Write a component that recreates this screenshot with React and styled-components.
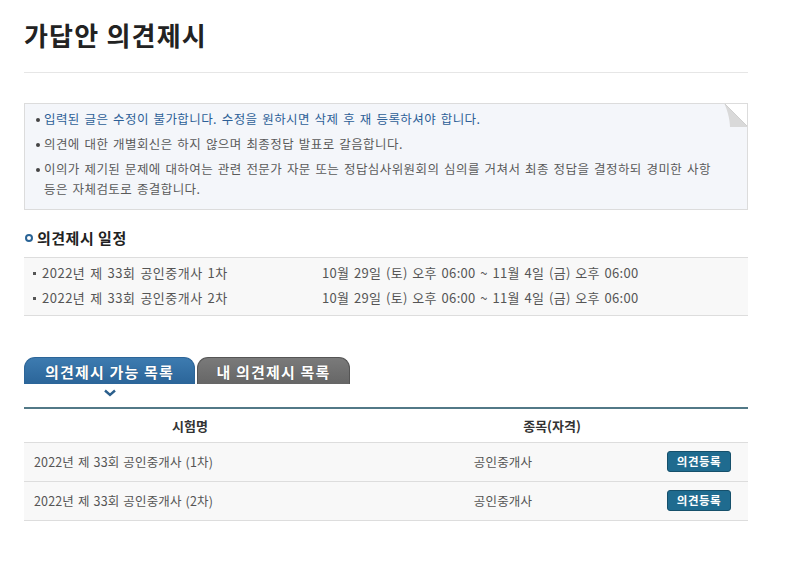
import React from "react";
import styled, { createGlobalStyle } from "styled-components";

const Global = createGlobalStyle`
  html, body { margin: 0; padding: 0; background: #fff; }
  body { font-family: "Noto Sans CJK KR", "Noto Sans", sans-serif; color: #333; }
  * { box-sizing: border-box; }
`;

const Page = styled.div`
  width: 772px;
  padding: 0 0 0 24px;
`;

const Inner = styled.div`
  width: 724px;
`;

const Title = styled.h1`
  margin: 0;
  padding-top: 17px;
  height: 73px;
  font-size: 26px;
  font-weight: 700;
  line-height: 36px;
  color: #222;
  letter-spacing: 1.2px;
  border-bottom: 1px solid #e6e6e6;
`;

const Notice = styled.div`
  position: relative;
  margin-top: 30px;
  background: #f4f6fa;
  border: 1px solid #dcdcdc;
  padding: 5px 20px 10px 10px;
  overflow: hidden;
`;

const Corner = styled.svg`
  position: absolute;
  top: -1px;
  right: -1px;
  display: block;
`;

const NoticeList = styled.ul`
  list-style: none;
  margin: 0;
  padding: 0;
`;

const NoticeItem = styled.li`
  position: relative;
  padding-left: 9px;
  font-size: 12.5px;
  line-height: 20px;
  letter-spacing: 0.42px;
  word-spacing: 1.5px;
  color: ${(p) => (p.$accent ? "#2d5f97" : "#5a5a5a")};
  & + & { margin-top: 5px; }
  &::before {
    content: "";
    position: absolute;
    left: 1px;
    top: 9px;
    width: 4px;
    height: 4px;
    border-radius: 50%;
    background: #444;
  }
`;

const SectionTitle = styled.h2`
  display: flex;
  align-items: center;
  gap: 4px;
  margin: 18px 0 0;
  font-size: 15px;
  font-weight: 700;
  line-height: 20px;
  letter-spacing: 0.5px;
  color: #222;
`;

const Ring = styled.span`
  width: 8px;
  height: 8px;
  border-radius: 50%;
  border: 2px solid #2a6496;
  margin-left: 1px;
`;

const Schedule = styled.div`
  margin-top: 9px;
  background: #f8f8f8;
  border-top: 1px solid #dddddd;
  border-bottom: 1px solid #dddddd;
  padding: 2px 0 5px;
`;

const ScheduleRow = styled.div`
  display: grid;
  grid-template-columns: 298px 1fr;
  font-size: 13px;
  line-height: 25px;
  letter-spacing: 0.3px;
  word-spacing: 1.5px;
  color: #555;
`;

const ScheduleName = styled.div`
  position: relative;
  padding-left: 18px;
  letter-spacing: 0.5px;
  &::before {
    content: "";
    position: absolute;
    left: 9px;
    top: 12px;
    width: 3px;
    height: 3px;
    background: #555;
  }
`;

const Tabs = styled.div`
  display: flex;
  gap: 2px;
  margin-top: 41px;
  height: 27px;
`;

const Tab = styled.div`
  position: relative;
  width: ${(p) => p.$w}px;
  height: 27px;
  border-radius: 11px 11px 0 0;
  display: flex;
  align-items: center;
  justify-content: center;
  font-size: 15px;
  font-weight: 700;
  color: #fff;
  letter-spacing: 1.2px;
  background: ${(p) =>
    p.$active
      ? "linear-gradient(#3d7bb0, #2b6599)"
      : "linear-gradient(#7a7a7a, #666666)"};
  border: 1px solid ${(p) => (p.$active ? "#2c6598" : "#555")};
  border-bottom: none;
  text-shadow: 0 0 1px rgba(0,0,0,0.3);
`;

const Chevron = styled.svg`
  display: block;
  margin: 5px 0 0 80px;
`;

const Table = styled.table`
  width: 724px;
  margin-top: 10px;
  border-collapse: collapse;
  border-top: 2px solid #527987;
  table-layout: fixed;
`;

const Th = styled.th`
  height: 34px;
  font-size: 13px;
  font-weight: 700;
  color: #333;
  text-align: center;
  border-bottom: 1px solid #dddddd;
  background: #fff;
  padding: 0;
`;

const Tr = styled.tr`
  background: #f8f8f8;
`;

const Td = styled.td`
  height: 39px;
  font-size: 12.5px;
  letter-spacing: 0.15px;
  word-spacing: 1px;
  color: #555;
  border-bottom: 1px solid #dddddd;
  text-align: ${(p) => p.$align || "center"};
  padding: ${(p) => (p.$align === "left" ? "0 0 0 10px" : "0")};
`;

const Button = styled.button`
  width: 64px;
  height: 21px;
  padding: 0;
  border: 1px solid #16506b;
  border-radius: 3px;
  background: #1f6b8f;
  color: #fff;
  font-family: inherit;
  font-size: 11.5px;
  font-weight: 700;
  line-height: 19px;
  letter-spacing: 0.5px;
  cursor: pointer;
`;

const schedules = [
  "2022년 제 33회 공인중개사 1차",
  "2022년 제 33회 공인중개사 2차",
];

const exams = [
  "2022년 제 33회 공인중개사 (1차)",
  "2022년 제 33회 공인중개사 (2차)",
];

export default function App() {
  return (
    <>
      <Global />
      <Page>
        <Inner>
          <Title>가답안 의견제시</Title>
          <Notice>
            <Corner width="24" height="24" viewBox="0 0 24 24">
              <polygon points="0,0 24,0 24,24" fill="#fff" />
              <path d="M0 0 L24 24 L6 24 C6 18 4 8 0 0 Z" fill="#d9d9d9" />
              <path d="M0 0 L24 24" stroke="#cfcfcf" strokeWidth="1" />
            </Corner>
            <NoticeList>
              <NoticeItem $accent>
                입력된 글은 수정이 불가합니다. 수정을 원하시면 삭제 후 재 등록하셔야 합니다.
              </NoticeItem>
              <NoticeItem>
                의견에 대한 개별회신은 하지 않으며 최종정답 발표로 갈음합니다.
              </NoticeItem>
              <NoticeItem>
                이의가 제기된 문제에 대하여는 관련 전문가 자문 또는 정답심사위원회의 심의를 거쳐서 최종 정답을 결정하되 경미한 사항
                <br />
                등은 자체검토로 종결합니다.
              </NoticeItem>
            </NoticeList>
          </Notice>

          <SectionTitle>
            <Ring />
            의견제시 일정
          </SectionTitle>
          <Schedule>
            {schedules.map((s) => (
              <ScheduleRow key={s}>
                <ScheduleName>{s}</ScheduleName>
                <div>10월 29일 (토) 오후 06:00 ~ 11월 4일 (금) 오후 06:00</div>
              </ScheduleRow>
            ))}
          </Schedule>

          <Tabs>
            <Tab $active $w={171}>의견제시 가능 목록</Tab>
            <Tab $w={153}>내 의견제시 목록</Tab>
          </Tabs>
          <Chevron width="12" height="8" viewBox="0 0 12 8">
            <path d="M1 1.5 L6 6 L11 1.5" fill="none" stroke="#2b5f8c" strokeWidth="2.4" />
          </Chevron>

          <Table>
            <colgroup>
              <col style={{ width: 332 }} />
              <col style={{ width: 294 }} />
              <col style={{ width: 98 }} />
            </colgroup>
            <thead>
              <tr>
                <Th>시험명</Th>
                <Th colSpan={2}>종목(자격)</Th>
              </tr>
            </thead>
            <tbody>
              {exams.map((e) => (
                <Tr key={e}>
                  <Td $align="left">{e}</Td>
                  <Td>공인중개사</Td>
                  <Td>
                    <Button>의견등록</Button>
                  </Td>
                </Tr>
              ))}
            </tbody>
          </Table>
        </Inner>
      </Page>
    </>
  );
}
